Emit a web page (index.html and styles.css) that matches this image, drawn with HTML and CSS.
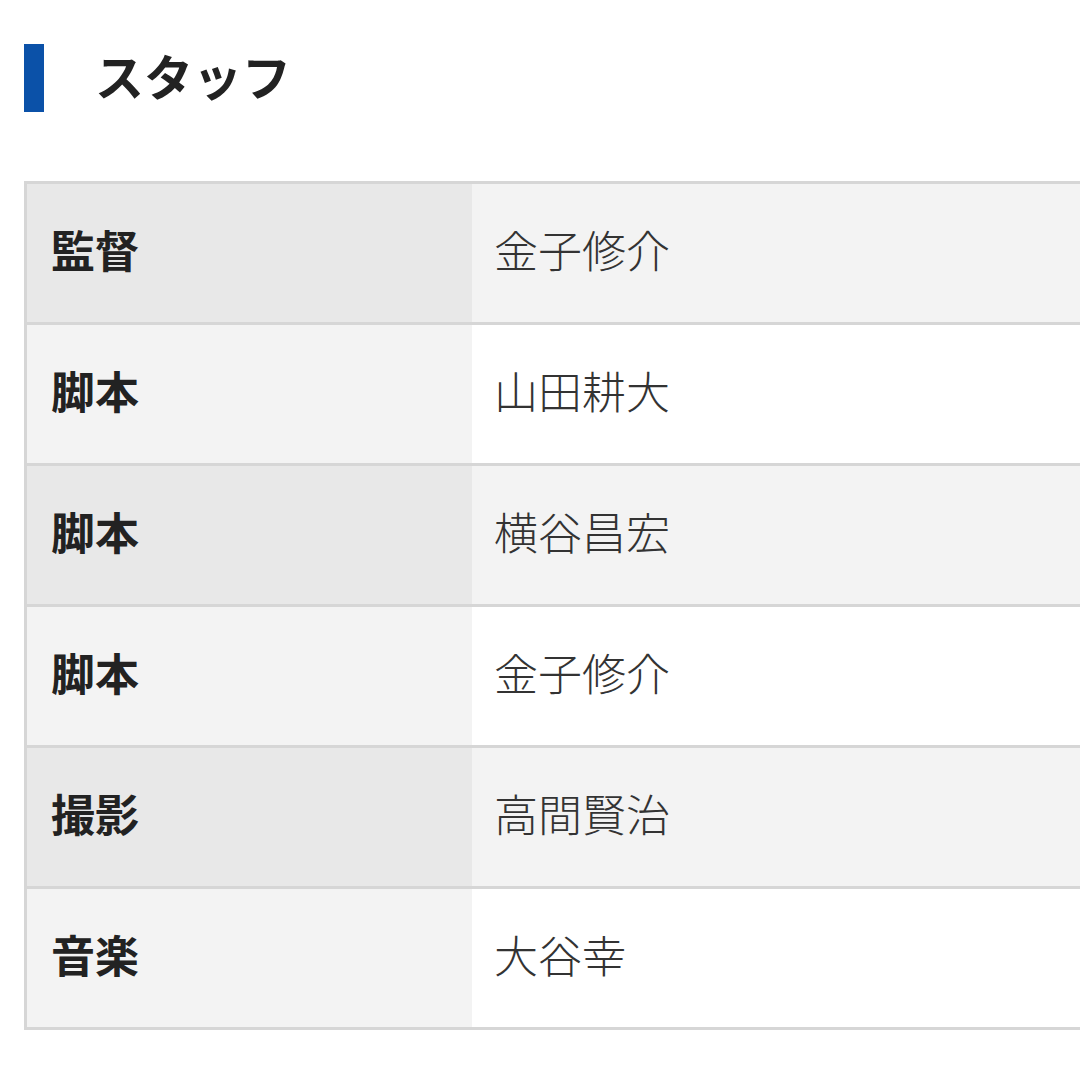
FILE: index.html
```html
<!DOCTYPE html>
<html lang="ja">
<head>
<meta charset="utf-8">
<link rel="stylesheet" href="styles.css">
</head>
<body>
<div class="page">
  <div class="heading">
    <span class="bar"></span>
    <h2 class="title">スタッフ</h2>
  </div>
  <table class="staff">
    <tr class="odd"><th>監督</th><td>金子修介</td></tr>
    <tr class="even"><th>脚本</th><td>山田耕大</td></tr>
    <tr class="odd"><th>脚本</th><td>横谷昌宏</td></tr>
    <tr class="even"><th>脚本</th><td>金子修介</td></tr>
    <tr class="odd"><th>撮影</th><td>高間賢治</td></tr>
    <tr class="even"><th>音楽</th><td>大谷幸</td></tr>
  </table>
</div>
</body>
</html>
```
FILE: styles.css
```css
html, body {
  margin: 0;
  padding: 0;
  background: #ffffff;
  overflow: hidden;
}
body {
  font-family: "Noto Sans CJK JP", "Noto Sans", sans-serif;
  width: 1080px;
  height: 1080px;
}
.page {
  padding: 44px 0 0 24px;
  overflow: hidden;
}
.heading {
  display: flex;
  align-items: center;
  height: 68px;
}
.bar {
  width: 20px;
  height: 68px;
  background: #0b51a8;
  flex: none;
}
.title {
  margin: 0 0 0 51px;
  padding-bottom: 8px;
  font-size: 49px;
  font-weight: 700;
  color: #222222;
  line-height: 1;
}
.staff {
  margin-top: 69px;
  width: 1120px;
  border-collapse: separate;
  border-spacing: 0;
  border-top: 3px solid #d6d6d6;
  border-left: 3px solid #d6d6d6;
}
.staff th,
.staff td {
  height: 130px;
  padding: 0 0 8px 24px;
  border-bottom: 3px solid #d6d6d6;
  text-align: left;
  vertical-align: middle;
  font-size: 44px;
  line-height: 1;
}
.staff th {
  width: 421px;
  font-weight: 700;
  color: #222222;
}
.staff td {
  padding-left: 22px;
  font-weight: 300;
  color: #333333;
}
.odd th { background: #e8e8e8; }
.odd td { background: #f3f3f3; }
.even th { background: #f3f3f3; }
.even td { background: #ffffff; }
```
